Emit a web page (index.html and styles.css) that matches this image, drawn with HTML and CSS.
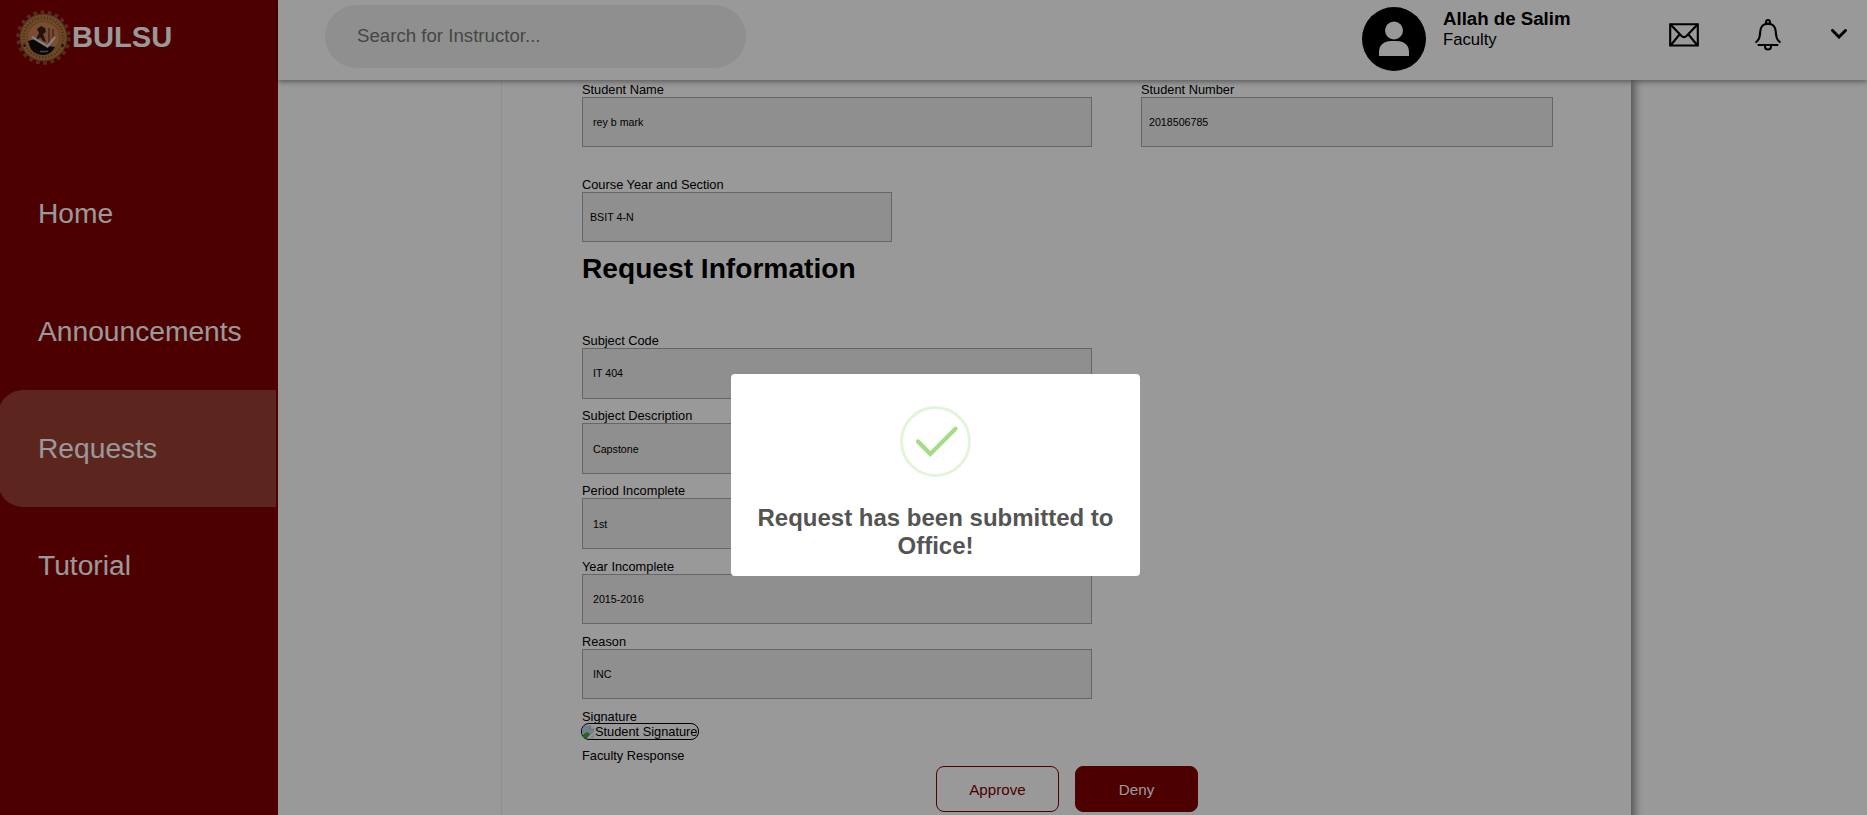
FILE: index.html
```html
<!DOCTYPE html>
<html lang="en">
<head>
<meta charset="utf-8">
<title>BULSU</title>
<link rel="stylesheet" href="styles.css">
</head>
<body>
<div class="app">
  <aside class="sidebar">
    <div class="brand">
      <svg class="logo" viewBox="0 0 55 55">
        <circle cx="27.5" cy="27.5" r="25.200" fill="none" stroke="#8a4a3a" stroke-width="4" stroke-dasharray="3.600 3.597"/>
        <circle cx="27.500" cy="27.500" r="24" fill="#8a5236"/>
        <circle cx="27.500" cy="27.500" r="22.800" fill="#b87c3c"/>
        <circle cx="27.500" cy="27.500" r="19.800" fill="none" stroke="#7d5630" stroke-width="3" stroke-dasharray="1.200 1.900"/>
        <circle cx="27.500" cy="27.500" r="16.500" fill="#a8623c"/>
        <circle cx="27.500" cy="27.500" r="15.500" fill="#c98055"/>
        <path d="M12 31l7-2 5 4 8 3 7 1-2 3c-3 4-6 5-10 5-6 0-12-4-13-8z" fill="#100c0c"/>
        <path d="M21 19l4-3 4 2 1 4-3 2 3 8-3-1-3-4-2 3-2-1 3-6z" fill="#38201c"/>
        <path d="M33 18v15M37 19v11" stroke="#8c4f35" stroke-width="2"/>
        <path d="M24 41.500h8" stroke="#777" stroke-width="1.500"/>
        <path d="M16 27l15.500 9.500L39 27" fill="none" stroke="#d8d2d4" stroke-width="2.400"/>
        <circle cx="8.500" cy="35.500" r="1.500" fill="#3d2416"/><circle cx="46.500" cy="35.500" r="1.500" fill="#3d2416"/>
      </svg>
      <span class="brand-name">BULSU</span>
    </div>
    <nav class="nav">
      <a class="nav-item">Home</a>
      <a class="nav-item">Announcements</a>
      <a class="nav-item active">Requests</a>
      <a class="nav-item">Tutorial</a>
    </nav>
  </aside>
  <div class="main">
    <header class="topbar">
      <div class="search">Search for Instructor...</div>
      <div class="user">
        <svg class="avatar" viewBox="0 0 64 64"><circle cx="32" cy="32" r="32"/><circle cx="32" cy="23.500" r="9" fill="#fff"/><path d="M17 49v-4c0-7 5-11 12-11h6c7 0 12 4 12 11v4z" fill="#fff"/></svg>
        <div class="who"><div class="user-name">Allah de Salim</div><div class="role">Faculty</div></div>
      </div>
      <svg class="mail" viewBox="0 0 30 24"><g fill="none" stroke="#000" stroke-width="2.100"><path d="M1.200 1.200h27.600v21.300H1.200z"/><path d="M1.500 1.500L12.500 13q2.500 2.200 5 0L28.500 1.500M1.500 22.500l9-11M28.500 22.500l-9-11"/></g></svg>
      <svg class="bell" viewBox="0 0 26 32"><g fill="none" stroke="#000" stroke-width="2.100" stroke-linecap="round"><circle cx="13" cy="3" r="2"/><path d="M1.200 23c3-2 3.800-5 4-10C5.500 8 8 4.800 13 4.800S20.500 8 20.800 13c.2 5 1 8 4 10M3.500 26h19M10 27.500c0 4 6 4 6 0"/></g></svg>
      <svg class="chevron" viewBox="0 0 16 10"><path d="M1.500 1.500L8 8l6.500-6.500" fill="none" stroke="#000" stroke-width="2.900" stroke-linecap="round"/></svg>
    </header>
    <div class="content">
      <section class="sheet">
        <div class="row">
          <div class="group wide"><label>Student Name</label><div class="field">rey b mark</div></div>
          <div class="group number"><label>Student Number</label><div class="field tight">2018506785</div></div>
        </div>
        <div class="group course"><label>Course Year and Section</label><div class="field tight">BSIT 4-N</div></div>
        <h2>Request Information</h2>
        <div class="stack">
          <div class="group wide tall"><label>Subject Code</label><div class="field">IT 404</div></div>
          <div class="group wide tall"><label>Subject Description</label><div class="field lower">Capstone</div></div>
          <div class="group wide tall"><label>Period Incomplete</label><div class="field lower">1st</div></div>
          <div class="group wide later"><label>Year Incomplete</label><div class="field">2015-2016</div></div>
          <div class="group wide later"><label>Reason</label><div class="field">INC</div></div>
        </div>
        <label class="sig-label">Signature</label>
        <div class="signature"><svg class="broken" viewBox="0 0 14 14"><path d="M0 0h9l4 4v3L5 14H0z" fill="#c3d3ee"/><path d="M9 0v4h4" fill="#fff" stroke="#999" stroke-width=".7"/><path d="M0 14l1-4 4-3 4 2-4 5z" fill="#48a432"/><path d="M13 9v5H8z" fill="#d6dbe4"/></svg>Student Signature</div>
        <label class="response">Faculty Response</label>
        <div class="actions"><button class="btn approve">Approve</button><button class="btn deny">Deny</button></div>
      </section>
    </div>
  </div>
</div>
<div class="overlay">
  <div class="modal">
    <svg class="success" viewBox="0 0 71 71"><circle cx="35.500" cy="35.500" r="34" fill="none" stroke="#e4f4db" stroke-width="3"/><path d="M18 35.500l12.300 12.500L55.500 22.800" fill="none" stroke="#a5dc86" stroke-width="4.200" stroke-linecap="round"/></svg>
    <div class="message">Request has been submitted to Office!</div>
  </div>
</div>
</body>
</html>
```
FILE: styles.css
```css
* { box-sizing: border-box; }
body { margin: 0; width: 1867px; height: 815px; overflow: hidden; font-family: "Liberation Sans", Arial, sans-serif; color: #000; background: #fff; }
.app { display: flex; width: 100%; height: 815px; overflow: hidden; }
.sidebar { width: 278px; flex: none; background: #800000; color: #fff; overflow: hidden; }
.brand { display: flex; align-items: center; height: 75px; padding-left: 16px; }
.logo { width: 55px; height: 55px; margin-right: 1px; }
.brand-name { font-size: 29.1px; font-weight: bold; }
.nav { margin-top: 80px; }
.nav-item { display: flex; align-items: center; height: 117.4px; width: 278px; margin-left: -2px; padding-left: 40px; font-size: 28.2px; color: #fff; }
.active { background: #993e32; border-radius: 25px 0 0 25px; }
.main { flex: 1; display: flex; flex-direction: column; min-width: 0; }
.topbar { position: relative; display: flex; flex: none; height: 80px; padding-left: 47px; background: #fff; box-shadow: 0 2px 5px rgba(0, 0, 0, .4); z-index: 1; }
.search { width: 421px; height: 63px; margin-top: 5px; padding-left: 32px; border-radius: 32px; background: #efefef; color: #757575; font-size: 18.67px; line-height: 61px; }
.user { display: flex; margin-left: 616px; width: 307px; }
.avatar { width: 64px; height: 64px; margin-top: 6.5px; flex: none; }
.who { margin: 8px 0 0 17px; white-space: nowrap; }
.user-name { font-size: 18.67px; font-weight: bold; line-height: 22px; }
.role { font-size: 16.67px; line-height: 20px; }
.mail { width: 30px; height: 24px; margin-top: 23px; }
.bell { width: 26px; height: 32px; margin: 19px 0 0 56px; }
.chevron { width: 16px; height: 10px; margin: 29px 0 0 50px; }
.content { flex: 1; min-height: 0; padding-left: 224px; }
.sheet { width: 1129px; height: 760px; padding: 2px 0 0 80px; box-shadow: 4px 0 8px rgba(0, 0, 0, .45); clip-path: inset(0 -16px 0 -1px); }
.row { display: flex; gap: 49px; }
.group { display: flex; flex-direction: column; }
.wide { width: 510px; }
.number { width: 412px; }
.course { width: 310px; margin-top: 30px; }
label { display: block; font-size: 12.8px; line-height: 15px; }
.field { height: 50px; border: 1px solid #aaa; background: #efefef; padding-left: 10px; font-size: 10.67px; line-height: 48px; }
.tight { padding-left: 7px; }
.tall .field { height: 51px; }
.field.lower { line-height: 50px; }
h2 { margin: 10px 0 48px; font-size: 28.15px; line-height: 33px; }
.stack { display: flex; flex-direction: column; gap: 9px; }
.later { margin-top: 1px; }
.sig-label { margin-top: 10px; }
.signature { display: flex; align-items: center; width: 118px; height: 17px; margin: -1px 0 0 -1px; border: 1px solid #000; border-radius: 8px; font-size: 12.8px; white-space: nowrap; overflow: hidden; }
.broken { width: 13px; height: 14px; flex: none; }
.response { margin-top: 8px; }
.actions { display: flex; gap: 16px; margin: 3px 0 0 354px; }
.btn { width: 123px; height: 46px; padding: 0; border: 1px solid #800000; border-radius: 8px; font: 15.2px "Liberation Sans", Arial, sans-serif; }
.approve { background: #fff; color: #800000; }
.deny { background: #800000; color: #fff; }
.overlay { position: fixed; inset: 0; z-index: 5; background: rgba(0, 0, 0, .4); }
.modal { position: absolute; left: 731px; top: 374px; width: 409px; height: 202px; padding-top: 32px; display: flex; flex-direction: column; align-items: center; background: #fff; border-radius: 4px; }
.success { width: 71px; height: 71px; flex: none; }
.message { width: 370px; margin-top: 27px; color: #545454; text-align: center; font-size: 24px; font-weight: bold; line-height: 28px; }
```
